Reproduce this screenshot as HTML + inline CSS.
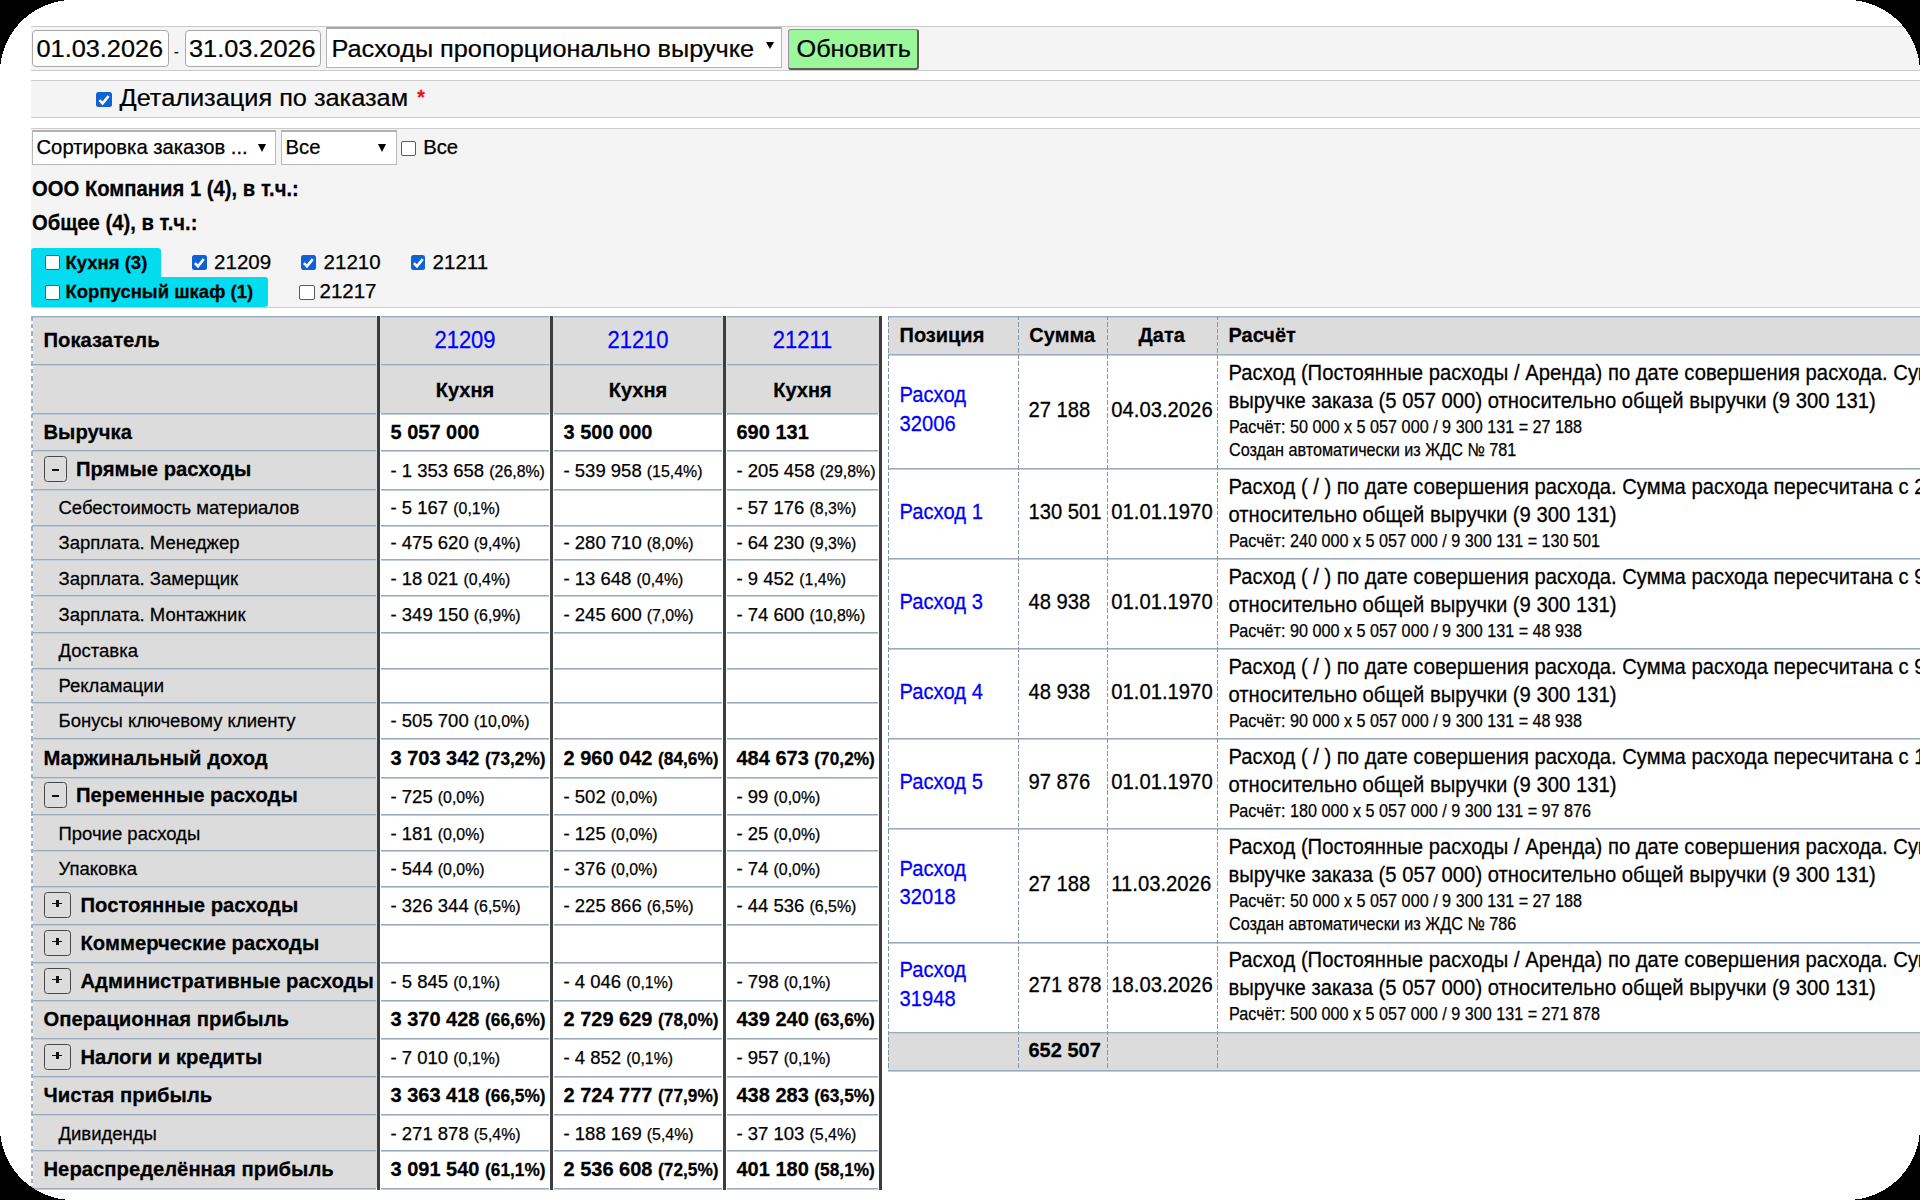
<!DOCTYPE html><html><head><meta charset="utf-8"><style>
html,body{margin:0;padding:0;background:#000;width:1920px;height:1200px;overflow:hidden}
#c{position:absolute;left:0;top:0;width:1920px;height:1200px;overflow:hidden;background:#fff;font-family:"Liberation Sans", sans-serif}
#c div{position:absolute;box-sizing:border-box}
#c .t{white-space:nowrap;-webkit-text-stroke:0.25px currentColor}
</style></head><body><div id="c">
<div style="left:31px;top:26px;width:1900px;height:45px;background:#f4f4f4;border-top:1.5px solid #cbcbcb;border-bottom:1.5px solid #cbcbcb"></div>
<div style="left:32px;top:30px;width:137px;height:37px;background:#fff;border:1.5px solid #a9a9a9;border-radius:4px"></div>
<div class="t" style="left:36.5px;top:33.99px;font-size:25.3px;line-height:29.09px;color:#000;transform:scale(1.0,0.97);transform-origin:0 23.31px;">01.03.2026</div>
<div class="t" style="left:174px;top:44.10px;font-size:14px;line-height:16.10px;color:#000;transform:scale(1.0,1.04);transform-origin:0 12.90px;">-</div>
<div style="left:185px;top:30px;width:136px;height:37px;background:#fff;border:1.5px solid #a9a9a9;border-radius:4px"></div>
<div class="t" style="left:189px;top:33.99px;font-size:25.3px;line-height:29.09px;color:#000;transform:scale(1.0,0.97);transform-origin:0 23.31px;">31.03.2026</div>
<div style="left:326px;top:27px;width:456px;height:41px;background:#fff;border:1.5px solid #b4b4b4;border-top:2px solid #a8a8a8"></div>
<div class="t" style="left:331.5px;top:33.89px;font-size:25.3px;line-height:29.09px;color:#000;transform:scale(1.0,0.97);transform-origin:0 23.31px;">Расходы пропорционально выручке</div>
<div style="left:765.75px;top:42.175px;width:0;height:0;border-left:4.25px solid transparent;border-right:4.25px solid transparent;border-top:7.65px solid #000;"></div>
<div style="left:787.5px;top:28.5px;width:131.5px;height:41px;background:#9af79a;border:1px solid #a08ca8;border-right:2px solid #5e5a60;border-bottom:2px solid #5e5a60;border-radius:3px"></div>
<div class="t" style="left:796.5px;top:33.93px;font-size:25.25px;line-height:29.04px;color:#000;transform:scale(1.0,0.97);transform-origin:0 23.27px;">Обновить</div>
<div style="left:31px;top:80px;width:1900px;height:38px;background:#f4f4f4;border-top:1.5px solid #cbcbcb;border-bottom:1.5px solid #cbcbcb"></div>
<div style="left:96px;top:92px;width:16px;height:15.2px;background:#0e62d6;border-radius:2.5px;"><svg width="16" height="15.2" viewBox="0 0 16 16" style="position:absolute;left:0;top:0"><path d="M3.2 8.6 L6.5 12 L12.8 4.2" stroke="#fff" stroke-width="2.8" fill="none" stroke-linecap="butt" stroke-linejoin="miter"/></svg></div>
<div class="t" style="left:119.5px;top:82.89px;font-size:25.3px;line-height:29.09px;color:#000;transform:scale(1.0,0.97);transform-origin:0 23.31px;">Детализация по заказам</div>
<div class="t" style="left:417.3px;top:86.33px;font-size:19.5px;line-height:22.42px;color:#ee1111;transform:scale(1.0,1.04);transform-origin:0 17.97px;font-weight:bold">*</div>
<div style="left:31px;top:128px;width:1900px;height:180px;background:#f4f4f4;border-top:1.5px solid #cbcbcb;border-bottom:1.5px solid #c9c9c9"></div>
<div style="left:32px;top:129.5px;width:244px;height:35px;background:#fff;border:1.5px solid #b9b9b9;border-top:2px solid #b0b0b0"></div>
<div class="t" style="left:36.5px;top:135.64px;font-size:20.25px;line-height:23.29px;color:#000;transform:scale(1.0,1.0);transform-origin:0 18.66px;">Сортировка заказов ...</div>
<div style="left:257.5px;top:143.95px;width:0;height:0;border-left:4.5px solid transparent;border-right:4.5px solid transparent;border-top:8.1px solid #000;"></div>
<div style="left:280.5px;top:129.5px;width:116px;height:35px;background:#fff;border:1.5px solid #b9b9b9;border-top:2px solid #b0b0b0"></div>
<div class="t" style="left:285.5px;top:135.64px;font-size:20.25px;line-height:23.29px;color:#000;transform:scale(1.0,1.0);transform-origin:0 18.66px;">Все</div>
<div style="left:378.0px;top:143.95px;width:0;height:0;border-left:4.5px solid transparent;border-right:4.5px solid transparent;border-top:8.1px solid #000;"></div>
<div style="left:401px;top:141px;width:14.5px;height:14.5px;box-sizing:border-box;background:#fff;border:1.5px solid #5a5a5a;border-radius:2px;"></div>
<div class="t" style="left:423.2px;top:135.64px;font-size:20.25px;line-height:23.29px;color:#000;transform:scale(1.0,1.0);transform-origin:0 18.66px;">Все</div>
<div class="t" style="left:32px;top:177.64px;font-size:20.25px;line-height:23.29px;font-weight:bold;color:#000;transform:scale(1.0,1.055);transform-origin:0 18.66px;">ООО Компания 1 (4), в т.ч.:</div>
<div class="t" style="left:32px;top:211.64px;font-size:20.25px;line-height:23.29px;font-weight:bold;color:#000;transform:scale(1.0,1.055);transform-origin:0 18.66px;">Общее (4), в т.ч.:</div>
<div style="left:31px;top:248px;width:130px;height:29.5px;background:#02dcee;border-radius:3px 3px 0 0"></div>
<div style="left:31px;top:277px;width:237px;height:29.5px;background:#02dcee;border-radius:3px"></div>
<div style="left:44.5px;top:255.3px;width:15px;height:15px;box-sizing:border-box;background:#fff;border:1.5px solid #5a5a5a;border-radius:2px;"></div>
<div style="left:44.5px;top:284.5px;width:15px;height:15px;box-sizing:border-box;background:#fff;border:1.5px solid #5a5a5a;border-radius:2px;"></div>
<div class="t" style="left:65.5px;top:251.75px;font-size:18.5px;line-height:21.27px;font-weight:bold;color:#000;transform:scale(1.0,1.02);transform-origin:0 17.05px;">Кухня (3)</div>
<div class="t" style="left:65.5px;top:280.75px;font-size:18.5px;line-height:21.27px;font-weight:bold;color:#000;transform:scale(1.0,1.02);transform-origin:0 17.05px;">Корпусный шкаф (1)</div>
<div style="left:192.3px;top:255px;width:14.7px;height:15.2px;background:#0e62d6;border-radius:2.5px;"><svg width="14.7" height="15.2" viewBox="0 0 16 16" style="position:absolute;left:0;top:0"><path d="M3.2 8.6 L6.5 12 L12.8 4.2" stroke="#fff" stroke-width="2.8" fill="none" stroke-linecap="butt" stroke-linejoin="miter"/></svg></div>
<div class="t" style="left:214.1px;top:250.21px;font-size:20.5px;line-height:23.57px;color:#000;transform:scale(1.0,1.0);transform-origin:0 18.89px;">21209</div>
<div style="left:301.3px;top:255px;width:14.7px;height:15.2px;background:#0e62d6;border-radius:2.5px;"><svg width="14.7" height="15.2" viewBox="0 0 16 16" style="position:absolute;left:0;top:0"><path d="M3.2 8.6 L6.5 12 L12.8 4.2" stroke="#fff" stroke-width="2.8" fill="none" stroke-linecap="butt" stroke-linejoin="miter"/></svg></div>
<div class="t" style="left:323.6px;top:250.21px;font-size:20.5px;line-height:23.57px;color:#000;transform:scale(1.0,1.0);transform-origin:0 18.89px;">21210</div>
<div style="left:410.8px;top:255px;width:14.7px;height:15.2px;background:#0e62d6;border-radius:2.5px;"><svg width="14.7" height="15.2" viewBox="0 0 16 16" style="position:absolute;left:0;top:0"><path d="M3.2 8.6 L6.5 12 L12.8 4.2" stroke="#fff" stroke-width="2.8" fill="none" stroke-linecap="butt" stroke-linejoin="miter"/></svg></div>
<div class="t" style="left:432.6px;top:250.21px;font-size:20.5px;line-height:23.57px;color:#000;transform:scale(1.0,1.0);transform-origin:0 18.89px;">21211</div>
<div style="left:299px;top:284.5px;width:15.5px;height:15.5px;box-sizing:border-box;background:#fff;border:1.5px solid #5a5a5a;border-radius:2px;"></div>
<div class="t" style="left:319.5px;top:279.11px;font-size:20.5px;line-height:23.57px;color:#000;transform:scale(1.0,1.0);transform-origin:0 18.89px;">21217</div>
<div style="left:33px;top:316px;width:344px;height:872px;background:#dcdcdc"></div>
<div style="left:380px;top:316px;width:170px;height:97px;background:#dcdcdc"></div>
<div style="left:553px;top:316px;width:170px;height:97px;background:#dcdcdc"></div>
<div style="left:726px;top:316px;width:153px;height:97px;background:#dcdcdc"></div>
<div style="left:377px;top:316px;width:3px;height:874px;background:#3d3d3d"></div>
<div style="left:550px;top:316px;width:3px;height:874px;background:#3d3d3d"></div>
<div style="left:723px;top:316px;width:3px;height:874px;background:#3d3d3d"></div>
<div style="left:879px;top:316px;width:3px;height:874px;background:#3d3d3d"></div>
<div style="left:32px;top:316px;width:344px;height:2px;background:linear-gradient(#9babbc 0 50%,#c3ced9 50% 100%)"></div>
<div style="left:381px;top:316px;width:168px;height:2px;background:linear-gradient(#9babbc 0 50%,#c3ced9 50% 100%)"></div>
<div style="left:554px;top:316px;width:168px;height:2px;background:linear-gradient(#9babbc 0 50%,#c3ced9 50% 100%)"></div>
<div style="left:727px;top:316px;width:151px;height:2px;background:linear-gradient(#9babbc 0 50%,#c3ced9 50% 100%)"></div>
<div style="left:32px;top:364px;width:344px;height:2px;background:linear-gradient(#9babbc 0 50%,#c3ced9 50% 100%)"></div>
<div style="left:381px;top:364px;width:168px;height:2px;background:linear-gradient(#9babbc 0 50%,#c3ced9 50% 100%)"></div>
<div style="left:554px;top:364px;width:168px;height:2px;background:linear-gradient(#9babbc 0 50%,#c3ced9 50% 100%)"></div>
<div style="left:727px;top:364px;width:151px;height:2px;background:linear-gradient(#9babbc 0 50%,#c3ced9 50% 100%)"></div>
<div style="left:32px;top:413px;width:344px;height:2px;background:linear-gradient(#9babbc 0 50%,#c3ced9 50% 100%)"></div>
<div style="left:381px;top:413px;width:168px;height:2px;background:linear-gradient(#9babbc 0 50%,#c3ced9 50% 100%)"></div>
<div style="left:554px;top:413px;width:168px;height:2px;background:linear-gradient(#9babbc 0 50%,#c3ced9 50% 100%)"></div>
<div style="left:727px;top:413px;width:151px;height:2px;background:linear-gradient(#9babbc 0 50%,#c3ced9 50% 100%)"></div>
<div style="left:32px;top:450px;width:344px;height:2px;background:linear-gradient(#9babbc 0 50%,#c3ced9 50% 100%)"></div>
<div style="left:381px;top:450px;width:168px;height:2px;background:linear-gradient(#9babbc 0 50%,#c3ced9 50% 100%)"></div>
<div style="left:554px;top:450px;width:168px;height:2px;background:linear-gradient(#9babbc 0 50%,#c3ced9 50% 100%)"></div>
<div style="left:727px;top:450px;width:151px;height:2px;background:linear-gradient(#9babbc 0 50%,#c3ced9 50% 100%)"></div>
<div style="left:32px;top:489px;width:344px;height:2px;background:linear-gradient(#9babbc 0 50%,#c3ced9 50% 100%)"></div>
<div style="left:381px;top:489px;width:168px;height:2px;background:linear-gradient(#9babbc 0 50%,#c3ced9 50% 100%)"></div>
<div style="left:554px;top:489px;width:168px;height:2px;background:linear-gradient(#9babbc 0 50%,#c3ced9 50% 100%)"></div>
<div style="left:727px;top:489px;width:151px;height:2px;background:linear-gradient(#9babbc 0 50%,#c3ced9 50% 100%)"></div>
<div style="left:32px;top:525px;width:344px;height:2px;background:linear-gradient(#9babbc 0 50%,#c3ced9 50% 100%)"></div>
<div style="left:381px;top:525px;width:168px;height:2px;background:linear-gradient(#9babbc 0 50%,#c3ced9 50% 100%)"></div>
<div style="left:554px;top:525px;width:168px;height:2px;background:linear-gradient(#9babbc 0 50%,#c3ced9 50% 100%)"></div>
<div style="left:727px;top:525px;width:151px;height:2px;background:linear-gradient(#9babbc 0 50%,#c3ced9 50% 100%)"></div>
<div style="left:32px;top:559px;width:344px;height:2px;background:linear-gradient(#9babbc 0 50%,#c3ced9 50% 100%)"></div>
<div style="left:381px;top:559px;width:168px;height:2px;background:linear-gradient(#9babbc 0 50%,#c3ced9 50% 100%)"></div>
<div style="left:554px;top:559px;width:168px;height:2px;background:linear-gradient(#9babbc 0 50%,#c3ced9 50% 100%)"></div>
<div style="left:727px;top:559px;width:151px;height:2px;background:linear-gradient(#9babbc 0 50%,#c3ced9 50% 100%)"></div>
<div style="left:32px;top:595px;width:344px;height:2px;background:linear-gradient(#9babbc 0 50%,#c3ced9 50% 100%)"></div>
<div style="left:381px;top:595px;width:168px;height:2px;background:linear-gradient(#9babbc 0 50%,#c3ced9 50% 100%)"></div>
<div style="left:554px;top:595px;width:168px;height:2px;background:linear-gradient(#9babbc 0 50%,#c3ced9 50% 100%)"></div>
<div style="left:727px;top:595px;width:151px;height:2px;background:linear-gradient(#9babbc 0 50%,#c3ced9 50% 100%)"></div>
<div style="left:32px;top:632px;width:344px;height:2px;background:linear-gradient(#9babbc 0 50%,#c3ced9 50% 100%)"></div>
<div style="left:381px;top:632px;width:168px;height:2px;background:linear-gradient(#9babbc 0 50%,#c3ced9 50% 100%)"></div>
<div style="left:554px;top:632px;width:168px;height:2px;background:linear-gradient(#9babbc 0 50%,#c3ced9 50% 100%)"></div>
<div style="left:727px;top:632px;width:151px;height:2px;background:linear-gradient(#9babbc 0 50%,#c3ced9 50% 100%)"></div>
<div style="left:32px;top:668px;width:344px;height:2px;background:linear-gradient(#9babbc 0 50%,#c3ced9 50% 100%)"></div>
<div style="left:381px;top:668px;width:168px;height:2px;background:linear-gradient(#9babbc 0 50%,#c3ced9 50% 100%)"></div>
<div style="left:554px;top:668px;width:168px;height:2px;background:linear-gradient(#9babbc 0 50%,#c3ced9 50% 100%)"></div>
<div style="left:727px;top:668px;width:151px;height:2px;background:linear-gradient(#9babbc 0 50%,#c3ced9 50% 100%)"></div>
<div style="left:32px;top:702px;width:344px;height:2px;background:linear-gradient(#9babbc 0 50%,#c3ced9 50% 100%)"></div>
<div style="left:381px;top:702px;width:168px;height:2px;background:linear-gradient(#9babbc 0 50%,#c3ced9 50% 100%)"></div>
<div style="left:554px;top:702px;width:168px;height:2px;background:linear-gradient(#9babbc 0 50%,#c3ced9 50% 100%)"></div>
<div style="left:727px;top:702px;width:151px;height:2px;background:linear-gradient(#9babbc 0 50%,#c3ced9 50% 100%)"></div>
<div style="left:32px;top:738px;width:344px;height:2px;background:linear-gradient(#9babbc 0 50%,#c3ced9 50% 100%)"></div>
<div style="left:381px;top:738px;width:168px;height:2px;background:linear-gradient(#9babbc 0 50%,#c3ced9 50% 100%)"></div>
<div style="left:554px;top:738px;width:168px;height:2px;background:linear-gradient(#9babbc 0 50%,#c3ced9 50% 100%)"></div>
<div style="left:727px;top:738px;width:151px;height:2px;background:linear-gradient(#9babbc 0 50%,#c3ced9 50% 100%)"></div>
<div style="left:32px;top:777px;width:344px;height:2px;background:linear-gradient(#9babbc 0 50%,#c3ced9 50% 100%)"></div>
<div style="left:381px;top:777px;width:168px;height:2px;background:linear-gradient(#9babbc 0 50%,#c3ced9 50% 100%)"></div>
<div style="left:554px;top:777px;width:168px;height:2px;background:linear-gradient(#9babbc 0 50%,#c3ced9 50% 100%)"></div>
<div style="left:727px;top:777px;width:151px;height:2px;background:linear-gradient(#9babbc 0 50%,#c3ced9 50% 100%)"></div>
<div style="left:32px;top:814px;width:344px;height:2px;background:linear-gradient(#9babbc 0 50%,#c3ced9 50% 100%)"></div>
<div style="left:381px;top:814px;width:168px;height:2px;background:linear-gradient(#9babbc 0 50%,#c3ced9 50% 100%)"></div>
<div style="left:554px;top:814px;width:168px;height:2px;background:linear-gradient(#9babbc 0 50%,#c3ced9 50% 100%)"></div>
<div style="left:727px;top:814px;width:151px;height:2px;background:linear-gradient(#9babbc 0 50%,#c3ced9 50% 100%)"></div>
<div style="left:32px;top:850px;width:344px;height:2px;background:linear-gradient(#9babbc 0 50%,#c3ced9 50% 100%)"></div>
<div style="left:381px;top:850px;width:168px;height:2px;background:linear-gradient(#9babbc 0 50%,#c3ced9 50% 100%)"></div>
<div style="left:554px;top:850px;width:168px;height:2px;background:linear-gradient(#9babbc 0 50%,#c3ced9 50% 100%)"></div>
<div style="left:727px;top:850px;width:151px;height:2px;background:linear-gradient(#9babbc 0 50%,#c3ced9 50% 100%)"></div>
<div style="left:32px;top:886px;width:344px;height:2px;background:linear-gradient(#9babbc 0 50%,#c3ced9 50% 100%)"></div>
<div style="left:381px;top:886px;width:168px;height:2px;background:linear-gradient(#9babbc 0 50%,#c3ced9 50% 100%)"></div>
<div style="left:554px;top:886px;width:168px;height:2px;background:linear-gradient(#9babbc 0 50%,#c3ced9 50% 100%)"></div>
<div style="left:727px;top:886px;width:151px;height:2px;background:linear-gradient(#9babbc 0 50%,#c3ced9 50% 100%)"></div>
<div style="left:32px;top:924px;width:344px;height:2px;background:linear-gradient(#9babbc 0 50%,#c3ced9 50% 100%)"></div>
<div style="left:381px;top:924px;width:168px;height:2px;background:linear-gradient(#9babbc 0 50%,#c3ced9 50% 100%)"></div>
<div style="left:554px;top:924px;width:168px;height:2px;background:linear-gradient(#9babbc 0 50%,#c3ced9 50% 100%)"></div>
<div style="left:727px;top:924px;width:151px;height:2px;background:linear-gradient(#9babbc 0 50%,#c3ced9 50% 100%)"></div>
<div style="left:32px;top:962px;width:344px;height:2px;background:linear-gradient(#9babbc 0 50%,#c3ced9 50% 100%)"></div>
<div style="left:381px;top:962px;width:168px;height:2px;background:linear-gradient(#9babbc 0 50%,#c3ced9 50% 100%)"></div>
<div style="left:554px;top:962px;width:168px;height:2px;background:linear-gradient(#9babbc 0 50%,#c3ced9 50% 100%)"></div>
<div style="left:727px;top:962px;width:151px;height:2px;background:linear-gradient(#9babbc 0 50%,#c3ced9 50% 100%)"></div>
<div style="left:32px;top:1000px;width:344px;height:2px;background:linear-gradient(#9babbc 0 50%,#c3ced9 50% 100%)"></div>
<div style="left:381px;top:1000px;width:168px;height:2px;background:linear-gradient(#9babbc 0 50%,#c3ced9 50% 100%)"></div>
<div style="left:554px;top:1000px;width:168px;height:2px;background:linear-gradient(#9babbc 0 50%,#c3ced9 50% 100%)"></div>
<div style="left:727px;top:1000px;width:151px;height:2px;background:linear-gradient(#9babbc 0 50%,#c3ced9 50% 100%)"></div>
<div style="left:32px;top:1038px;width:344px;height:2px;background:linear-gradient(#9babbc 0 50%,#c3ced9 50% 100%)"></div>
<div style="left:381px;top:1038px;width:168px;height:2px;background:linear-gradient(#9babbc 0 50%,#c3ced9 50% 100%)"></div>
<div style="left:554px;top:1038px;width:168px;height:2px;background:linear-gradient(#9babbc 0 50%,#c3ced9 50% 100%)"></div>
<div style="left:727px;top:1038px;width:151px;height:2px;background:linear-gradient(#9babbc 0 50%,#c3ced9 50% 100%)"></div>
<div style="left:32px;top:1076px;width:344px;height:2px;background:linear-gradient(#9babbc 0 50%,#c3ced9 50% 100%)"></div>
<div style="left:381px;top:1076px;width:168px;height:2px;background:linear-gradient(#9babbc 0 50%,#c3ced9 50% 100%)"></div>
<div style="left:554px;top:1076px;width:168px;height:2px;background:linear-gradient(#9babbc 0 50%,#c3ced9 50% 100%)"></div>
<div style="left:727px;top:1076px;width:151px;height:2px;background:linear-gradient(#9babbc 0 50%,#c3ced9 50% 100%)"></div>
<div style="left:32px;top:1114px;width:344px;height:2px;background:linear-gradient(#9babbc 0 50%,#c3ced9 50% 100%)"></div>
<div style="left:381px;top:1114px;width:168px;height:2px;background:linear-gradient(#9babbc 0 50%,#c3ced9 50% 100%)"></div>
<div style="left:554px;top:1114px;width:168px;height:2px;background:linear-gradient(#9babbc 0 50%,#c3ced9 50% 100%)"></div>
<div style="left:727px;top:1114px;width:151px;height:2px;background:linear-gradient(#9babbc 0 50%,#c3ced9 50% 100%)"></div>
<div style="left:32px;top:1150px;width:344px;height:2px;background:linear-gradient(#9babbc 0 50%,#c3ced9 50% 100%)"></div>
<div style="left:381px;top:1150px;width:168px;height:2px;background:linear-gradient(#9babbc 0 50%,#c3ced9 50% 100%)"></div>
<div style="left:554px;top:1150px;width:168px;height:2px;background:linear-gradient(#9babbc 0 50%,#c3ced9 50% 100%)"></div>
<div style="left:727px;top:1150px;width:151px;height:2px;background:linear-gradient(#9babbc 0 50%,#c3ced9 50% 100%)"></div>
<div style="left:32px;top:1188px;width:344px;height:2px;background:linear-gradient(#9babbc 0 50%,#c3ced9 50% 100%)"></div>
<div style="left:381px;top:1188px;width:168px;height:2px;background:linear-gradient(#9babbc 0 50%,#c3ced9 50% 100%)"></div>
<div style="left:554px;top:1188px;width:168px;height:2px;background:linear-gradient(#9babbc 0 50%,#c3ced9 50% 100%)"></div>
<div style="left:727px;top:1188px;width:151px;height:2px;background:linear-gradient(#9babbc 0 50%,#c3ced9 50% 100%)"></div>
<div style="left:31px;top:316px;width:2px;height:874px;background:repeating-linear-gradient(to bottom,#9fb0c2 0 4.75px,transparent 4.75px 7.5px)"></div>
<div class="t" style="left:43.5px;top:329.34px;font-size:20.25px;line-height:23.29px;font-weight:bold;color:#000;transform:scale(1.0,1.04);transform-origin:0 18.66px;">Показатель</div>
<div class="t" style="left:380px;width:170px;text-align:center;top:327.53px;font-size:22px;line-height:25.30px;color:#0000ff;transform:scale(1.0,1.066);transform-origin:0 20.27px;">21209</div>
<div class="t" style="left:380px;width:170px;text-align:center;top:378.87px;font-size:20px;line-height:23.00px;font-weight:bold;color:#000;transform:scale(1.0,1.04);transform-origin:0 18.43px;">Кухня</div>
<div class="t" style="left:553px;width:170px;text-align:center;top:327.53px;font-size:22px;line-height:25.30px;color:#0000ff;transform:scale(1.0,1.066);transform-origin:0 20.27px;">21210</div>
<div class="t" style="left:553px;width:170px;text-align:center;top:378.87px;font-size:20px;line-height:23.00px;font-weight:bold;color:#000;transform:scale(1.0,1.04);transform-origin:0 18.43px;">Кухня</div>
<div class="t" style="left:726px;width:153px;text-align:center;top:327.53px;font-size:22px;line-height:25.30px;color:#0000ff;transform:scale(1.0,1.066);transform-origin:0 20.27px;">21211</div>
<div class="t" style="left:726px;width:153px;text-align:center;top:378.87px;font-size:20px;line-height:23.00px;font-weight:bold;color:#000;transform:scale(1.0,1.04);transform-origin:0 18.43px;">Кухня</div>
<div class="t" style="left:43.5px;top:420.64px;font-size:20.25px;line-height:23.29px;font-weight:bold;color:#000;transform:scale(1.0,1.04);transform-origin:0 18.66px;">Выручка</div>
<div class="t" style="left:390.5px;top:420.87px;font-size:20px;line-height:23.00px;color:#000;transform:scale(1.0,1.04);transform-origin:0 18.43px;"><span style="font-weight:bold">5 057 000</span></div>
<div class="t" style="left:563.5px;top:420.87px;font-size:20px;line-height:23.00px;color:#000;transform:scale(1.0,1.04);transform-origin:0 18.43px;"><span style="font-weight:bold">3 500 000</span></div>
<div class="t" style="left:736.5px;top:420.87px;font-size:20px;line-height:23.00px;color:#000;transform:scale(1.0,1.04);transform-origin:0 18.43px;"><span style="font-weight:bold">690 131</span></div>
<div style="left:44px;top:456.4px;width:23px;height:26px;border:1.6px solid #474747;border-radius:3.5px;background:transparent"></div>
<div style="left:52.3px;top:469.4px;width:6.7px;height:1.7px;background:#111"></div>
<div class="t" style="left:76px;top:458.44px;font-size:20.25px;line-height:23.29px;font-weight:bold;color:#000;transform:scale(1.0,1.04);transform-origin:0 18.66px;">Прямые расходы</div>
<div class="t" style="left:390.5px;top:459.85px;font-size:18.5px;line-height:21.27px;color:#000;transform:scale(1.0,1.0);transform-origin:0 17.05px;">- 1 353 658 <span style="font-size:15.9px">(26,8%)</span></div>
<div class="t" style="left:563.5px;top:459.85px;font-size:18.5px;line-height:21.27px;color:#000;transform:scale(1.0,1.0);transform-origin:0 17.05px;">- 539 958 <span style="font-size:15.9px">(15,4%)</span></div>
<div class="t" style="left:736.5px;top:459.85px;font-size:18.5px;line-height:21.27px;color:#000;transform:scale(1.0,1.0);transform-origin:0 17.05px;">- 205 458 <span style="font-size:15.9px">(29,8%)</span></div>
<div class="t" style="left:58.5px;top:497.25px;font-size:18.5px;line-height:21.27px;color:#000;transform:scale(1.0,1.02);transform-origin:0 17.05px;">Себестоимость материалов</div>
<div class="t" style="left:390.5px;top:497.25px;font-size:18.5px;line-height:21.27px;color:#000;transform:scale(1.0,1.0);transform-origin:0 17.05px;">- 5 167 <span style="font-size:15.9px">(0,1%)</span></div>
<div class="t" style="left:736.5px;top:497.25px;font-size:18.5px;line-height:21.27px;color:#000;transform:scale(1.0,1.0);transform-origin:0 17.05px;">- 57 176 <span style="font-size:15.9px">(8,3%)</span></div>
<div class="t" style="left:58.5px;top:532.40px;font-size:18.5px;line-height:21.27px;color:#000;transform:scale(1.0,1.02);transform-origin:0 17.05px;">Зарплата. Менеджер</div>
<div class="t" style="left:390.5px;top:532.40px;font-size:18.5px;line-height:21.27px;color:#000;transform:scale(1.0,1.0);transform-origin:0 17.05px;">- 475 620 <span style="font-size:15.9px">(9,4%)</span></div>
<div class="t" style="left:563.5px;top:532.40px;font-size:18.5px;line-height:21.27px;color:#000;transform:scale(1.0,1.0);transform-origin:0 17.05px;">- 280 710 <span style="font-size:15.9px">(8,0%)</span></div>
<div class="t" style="left:736.5px;top:532.40px;font-size:18.5px;line-height:21.27px;color:#000;transform:scale(1.0,1.0);transform-origin:0 17.05px;">- 64 230 <span style="font-size:15.9px">(9,3%)</span></div>
<div class="t" style="left:58.5px;top:567.55px;font-size:18.5px;line-height:21.27px;color:#000;transform:scale(1.0,1.02);transform-origin:0 17.05px;">Зарплата. Замерщик</div>
<div class="t" style="left:390.5px;top:567.55px;font-size:18.5px;line-height:21.27px;color:#000;transform:scale(1.0,1.0);transform-origin:0 17.05px;">- 18 021 <span style="font-size:15.9px">(0,4%)</span></div>
<div class="t" style="left:563.5px;top:567.55px;font-size:18.5px;line-height:21.27px;color:#000;transform:scale(1.0,1.0);transform-origin:0 17.05px;">- 13 648 <span style="font-size:15.9px">(0,4%)</span></div>
<div class="t" style="left:736.5px;top:567.55px;font-size:18.5px;line-height:21.27px;color:#000;transform:scale(1.0,1.0);transform-origin:0 17.05px;">- 9 452 <span style="font-size:15.9px">(1,4%)</span></div>
<div class="t" style="left:58.5px;top:603.65px;font-size:18.5px;line-height:21.27px;color:#000;transform:scale(1.0,1.02);transform-origin:0 17.05px;">Зарплата. Монтажник</div>
<div class="t" style="left:390.5px;top:603.65px;font-size:18.5px;line-height:21.27px;color:#000;transform:scale(1.0,1.0);transform-origin:0 17.05px;">- 349 150 <span style="font-size:15.9px">(6,9%)</span></div>
<div class="t" style="left:563.5px;top:603.65px;font-size:18.5px;line-height:21.27px;color:#000;transform:scale(1.0,1.0);transform-origin:0 17.05px;">- 245 600 <span style="font-size:15.9px">(7,0%)</span></div>
<div class="t" style="left:736.5px;top:603.65px;font-size:18.5px;line-height:21.27px;color:#000;transform:scale(1.0,1.0);transform-origin:0 17.05px;">- 74 600 <span style="font-size:15.9px">(10,8%)</span></div>
<div class="t" style="left:58.5px;top:639.75px;font-size:18.5px;line-height:21.27px;color:#000;transform:scale(1.0,1.02);transform-origin:0 17.05px;">Доставка</div>
<div class="t" style="left:58.5px;top:675.10px;font-size:18.5px;line-height:21.27px;color:#000;transform:scale(1.0,1.02);transform-origin:0 17.05px;">Рекламации</div>
<div class="t" style="left:58.5px;top:710.35px;font-size:18.5px;line-height:21.27px;color:#000;transform:scale(1.0,1.02);transform-origin:0 17.05px;">Бонусы ключевому клиенту</div>
<div class="t" style="left:390.5px;top:710.35px;font-size:18.5px;line-height:21.27px;color:#000;transform:scale(1.0,1.0);transform-origin:0 17.05px;">- 505 700 <span style="font-size:15.9px">(10,0%)</span></div>
<div class="t" style="left:43.5px;top:746.54px;font-size:20.25px;line-height:23.29px;font-weight:bold;color:#000;transform:scale(1.0,1.04);transform-origin:0 18.66px;">Маржинальный доход</div>
<div class="t" style="left:390.5px;top:746.77px;font-size:20px;line-height:23.00px;color:#000;transform:scale(1.0,1.04);transform-origin:0 18.43px;"><span style="font-weight:bold">3 703 342</span> <span style="font-weight:bold;font-size:17.3px">(73,2%)</span></div>
<div class="t" style="left:563.5px;top:746.77px;font-size:20px;line-height:23.00px;color:#000;transform:scale(1.0,1.04);transform-origin:0 18.43px;"><span style="font-weight:bold">2 960 042</span> <span style="font-weight:bold;font-size:17.3px">(84,6%)</span></div>
<div class="t" style="left:736.5px;top:746.77px;font-size:20px;line-height:23.00px;color:#000;transform:scale(1.0,1.04);transform-origin:0 18.43px;"><span style="font-weight:bold">484 673</span> <span style="font-weight:bold;font-size:17.3px">(70,2%)</span></div>
<div style="left:44px;top:782.4px;width:23px;height:26px;border:1.6px solid #474747;border-radius:3.5px;background:transparent"></div>
<div style="left:52.3px;top:795.35px;width:6.7px;height:1.7px;background:#111"></div>
<div class="t" style="left:76px;top:784.39px;font-size:20.25px;line-height:23.29px;font-weight:bold;color:#000;transform:scale(1.0,1.04);transform-origin:0 18.66px;">Переменные расходы</div>
<div class="t" style="left:390.5px;top:785.80px;font-size:18.5px;line-height:21.27px;color:#000;transform:scale(1.0,1.0);transform-origin:0 17.05px;">- 725 <span style="font-size:15.9px">(0,0%)</span></div>
<div class="t" style="left:563.5px;top:785.80px;font-size:18.5px;line-height:21.27px;color:#000;transform:scale(1.0,1.0);transform-origin:0 17.05px;">- 502 <span style="font-size:15.9px">(0,0%)</span></div>
<div class="t" style="left:736.5px;top:785.80px;font-size:18.5px;line-height:21.27px;color:#000;transform:scale(1.0,1.0);transform-origin:0 17.05px;">- 99 <span style="font-size:15.9px">(0,0%)</span></div>
<div class="t" style="left:58.5px;top:822.55px;font-size:18.5px;line-height:21.27px;color:#000;transform:scale(1.0,1.02);transform-origin:0 17.05px;">Прочие расходы</div>
<div class="t" style="left:390.5px;top:822.55px;font-size:18.5px;line-height:21.27px;color:#000;transform:scale(1.0,1.0);transform-origin:0 17.05px;">- 181 <span style="font-size:15.9px">(0,0%)</span></div>
<div class="t" style="left:563.5px;top:822.55px;font-size:18.5px;line-height:21.27px;color:#000;transform:scale(1.0,1.0);transform-origin:0 17.05px;">- 125 <span style="font-size:15.9px">(0,0%)</span></div>
<div class="t" style="left:736.5px;top:822.55px;font-size:18.5px;line-height:21.27px;color:#000;transform:scale(1.0,1.0);transform-origin:0 17.05px;">- 25 <span style="font-size:15.9px">(0,0%)</span></div>
<div class="t" style="left:58.5px;top:858.45px;font-size:18.5px;line-height:21.27px;color:#000;transform:scale(1.0,1.02);transform-origin:0 17.05px;">Упаковка</div>
<div class="t" style="left:390.5px;top:858.45px;font-size:18.5px;line-height:21.27px;color:#000;transform:scale(1.0,1.0);transform-origin:0 17.05px;">- 544 <span style="font-size:15.9px">(0,0%)</span></div>
<div class="t" style="left:563.5px;top:858.45px;font-size:18.5px;line-height:21.27px;color:#000;transform:scale(1.0,1.0);transform-origin:0 17.05px;">- 376 <span style="font-size:15.9px">(0,0%)</span></div>
<div class="t" style="left:736.5px;top:858.45px;font-size:18.5px;line-height:21.27px;color:#000;transform:scale(1.0,1.0);transform-origin:0 17.05px;">- 74 <span style="font-size:15.9px">(0,0%)</span></div>
<div style="left:44px;top:891.6px;width:27px;height:26px;border:1.6px solid #474747;border-radius:3.5px;background:transparent"></div>
<div style="left:52.3px;top:902.65px;width:9.9px;height:1.7px;background:#111"></div>
<div style="left:56.3px;top:899.9499999999999px;width:2.4px;height:7.0px;background:#111"></div>
<div class="t" style="left:80.5px;top:893.69px;font-size:20.25px;line-height:23.29px;font-weight:bold;color:#000;transform:scale(1.0,1.04);transform-origin:0 18.66px;">Постоянные расходы</div>
<div class="t" style="left:390.5px;top:895.10px;font-size:18.5px;line-height:21.27px;color:#000;transform:scale(1.0,1.0);transform-origin:0 17.05px;">- 326 344 <span style="font-size:15.9px">(6,5%)</span></div>
<div class="t" style="left:563.5px;top:895.10px;font-size:18.5px;line-height:21.27px;color:#000;transform:scale(1.0,1.0);transform-origin:0 17.05px;">- 225 866 <span style="font-size:15.9px">(6,5%)</span></div>
<div class="t" style="left:736.5px;top:895.10px;font-size:18.5px;line-height:21.27px;color:#000;transform:scale(1.0,1.0);transform-origin:0 17.05px;">- 44 536 <span style="font-size:15.9px">(6,5%)</span></div>
<div style="left:44px;top:929.6px;width:27px;height:26px;border:1.6px solid #474747;border-radius:3.5px;background:transparent"></div>
<div style="left:52.3px;top:940.625px;width:9.9px;height:1.7px;background:#111"></div>
<div style="left:56.3px;top:937.925px;width:2.4px;height:7.0px;background:#111"></div>
<div class="t" style="left:80.5px;top:931.66px;font-size:20.25px;line-height:23.29px;font-weight:bold;color:#000;transform:scale(1.0,1.04);transform-origin:0 18.66px;">Коммерческие расходы</div>
<div style="left:44px;top:967.6px;width:27px;height:26px;border:1.6px solid #474747;border-radius:3.5px;background:transparent"></div>
<div style="left:52.3px;top:978.6px;width:9.9px;height:1.7px;background:#111"></div>
<div style="left:56.3px;top:975.9px;width:2.4px;height:7.0px;background:#111"></div>
<div class="t" style="left:80.5px;top:969.64px;font-size:20.25px;line-height:23.29px;font-weight:bold;color:#000;transform:scale(1.0,1.04);transform-origin:0 18.66px;">Административные расходы</div>
<div class="t" style="left:390.5px;top:971.05px;font-size:18.5px;line-height:21.27px;color:#000;transform:scale(1.0,1.0);transform-origin:0 17.05px;">- 5 845 <span style="font-size:15.9px">(0,1%)</span></div>
<div class="t" style="left:563.5px;top:971.05px;font-size:18.5px;line-height:21.27px;color:#000;transform:scale(1.0,1.0);transform-origin:0 17.05px;">- 4 046 <span style="font-size:15.9px">(0,1%)</span></div>
<div class="t" style="left:736.5px;top:971.05px;font-size:18.5px;line-height:21.27px;color:#000;transform:scale(1.0,1.0);transform-origin:0 17.05px;">- 798 <span style="font-size:15.9px">(0,1%)</span></div>
<div class="t" style="left:43.5px;top:1008.06px;font-size:20.25px;line-height:23.29px;font-weight:bold;color:#000;transform:scale(1.0,1.04);transform-origin:0 18.66px;">Операционная прибыль</div>
<div class="t" style="left:390.5px;top:1008.29px;font-size:20px;line-height:23.00px;color:#000;transform:scale(1.0,1.04);transform-origin:0 18.43px;"><span style="font-weight:bold">3 370 428</span> <span style="font-weight:bold;font-size:17.3px">(66,6%)</span></div>
<div class="t" style="left:563.5px;top:1008.29px;font-size:20px;line-height:23.00px;color:#000;transform:scale(1.0,1.04);transform-origin:0 18.43px;"><span style="font-weight:bold">2 729 629</span> <span style="font-weight:bold;font-size:17.3px">(78,0%)</span></div>
<div class="t" style="left:736.5px;top:1008.29px;font-size:20px;line-height:23.00px;color:#000;transform:scale(1.0,1.04);transform-origin:0 18.43px;"><span style="font-weight:bold">439 240</span> <span style="font-weight:bold;font-size:17.3px">(63,6%)</span></div>
<div style="left:44px;top:1043.8px;width:27px;height:26px;border:1.6px solid #474747;border-radius:3.5px;background:transparent"></div>
<div style="left:52.3px;top:1054.8px;width:9.9px;height:1.7px;background:#111"></div>
<div style="left:56.3px;top:1052.1000000000001px;width:2.4px;height:7.0px;background:#111"></div>
<div class="t" style="left:80.5px;top:1045.84px;font-size:20.25px;line-height:23.29px;font-weight:bold;color:#000;transform:scale(1.0,1.04);transform-origin:0 18.66px;">Налоги и кредиты</div>
<div class="t" style="left:390.5px;top:1047.25px;font-size:18.5px;line-height:21.27px;color:#000;transform:scale(1.0,1.0);transform-origin:0 17.05px;">- 7 010 <span style="font-size:15.9px">(0,1%)</span></div>
<div class="t" style="left:563.5px;top:1047.25px;font-size:18.5px;line-height:21.27px;color:#000;transform:scale(1.0,1.0);transform-origin:0 17.05px;">- 4 852 <span style="font-size:15.9px">(0,1%)</span></div>
<div class="t" style="left:736.5px;top:1047.25px;font-size:18.5px;line-height:21.27px;color:#000;transform:scale(1.0,1.0);transform-origin:0 17.05px;">- 957 <span style="font-size:15.9px">(0,1%)</span></div>
<div class="t" style="left:43.5px;top:1084.14px;font-size:20.25px;line-height:23.29px;font-weight:bold;color:#000;transform:scale(1.0,1.04);transform-origin:0 18.66px;">Чистая прибыль</div>
<div class="t" style="left:390.5px;top:1084.37px;font-size:20px;line-height:23.00px;color:#000;transform:scale(1.0,1.04);transform-origin:0 18.43px;"><span style="font-weight:bold">3 363 418</span> <span style="font-weight:bold;font-size:17.3px">(66,5%)</span></div>
<div class="t" style="left:563.5px;top:1084.37px;font-size:20px;line-height:23.00px;color:#000;transform:scale(1.0,1.04);transform-origin:0 18.43px;"><span style="font-weight:bold">2 724 777</span> <span style="font-weight:bold;font-size:17.3px">(77,9%)</span></div>
<div class="t" style="left:736.5px;top:1084.37px;font-size:20px;line-height:23.00px;color:#000;transform:scale(1.0,1.04);transform-origin:0 18.43px;"><span style="font-weight:bold">438 283</span> <span style="font-weight:bold;font-size:17.3px">(63,5%)</span></div>
<div class="t" style="left:58.5px;top:1122.55px;font-size:18.5px;line-height:21.27px;color:#000;transform:scale(1.0,1.02);transform-origin:0 17.05px;">Дивиденды</div>
<div class="t" style="left:390.5px;top:1122.55px;font-size:18.5px;line-height:21.27px;color:#000;transform:scale(1.0,1.0);transform-origin:0 17.05px;">- 271 878 <span style="font-size:15.9px">(5,4%)</span></div>
<div class="t" style="left:563.5px;top:1122.55px;font-size:18.5px;line-height:21.27px;color:#000;transform:scale(1.0,1.0);transform-origin:0 17.05px;">- 188 169 <span style="font-size:15.9px">(5,4%)</span></div>
<div class="t" style="left:736.5px;top:1122.55px;font-size:18.5px;line-height:21.27px;color:#000;transform:scale(1.0,1.0);transform-origin:0 17.05px;">- 37 103 <span style="font-size:15.9px">(5,4%)</span></div>
<div class="t" style="left:43.5px;top:1157.99px;font-size:20.25px;line-height:23.29px;font-weight:bold;color:#000;transform:scale(1.0,1.04);transform-origin:0 18.66px;">Нераспределённая прибыль</div>
<div class="t" style="left:390.5px;top:1158.22px;font-size:20px;line-height:23.00px;color:#000;transform:scale(1.0,1.04);transform-origin:0 18.43px;"><span style="font-weight:bold">3 091 540</span> <span style="font-weight:bold;font-size:17.3px">(61,1%)</span></div>
<div class="t" style="left:563.5px;top:1158.22px;font-size:20px;line-height:23.00px;color:#000;transform:scale(1.0,1.04);transform-origin:0 18.43px;"><span style="font-weight:bold">2 536 608</span> <span style="font-weight:bold;font-size:17.3px">(72,5%)</span></div>
<div class="t" style="left:736.5px;top:1158.22px;font-size:20px;line-height:23.00px;color:#000;transform:scale(1.0,1.04);transform-origin:0 18.43px;"><span style="font-weight:bold">401 180</span> <span style="font-weight:bold;font-size:17.3px">(58,1%)</span></div>
<div style="left:888px;top:316px;width:1052px;height:38px;background:#dcdcdc"></div>
<div style="left:888px;top:1032px;width:1052px;height:38px;background:#dcdcdc"></div>
<div style="left:888px;top:316px;width:1052px;height:2px;background:linear-gradient(#9babbc 0 50%,#c3ced9 50% 100%)"></div>
<div style="left:888px;top:354px;width:1052px;height:2px;background:linear-gradient(#9babbc 0 50%,#c3ced9 50% 100%)"></div>
<div style="left:888px;top:468px;width:1052px;height:2px;background:linear-gradient(#9babbc 0 50%,#c3ced9 50% 100%)"></div>
<div style="left:888px;top:558px;width:1052px;height:2px;background:linear-gradient(#9babbc 0 50%,#c3ced9 50% 100%)"></div>
<div style="left:888px;top:648px;width:1052px;height:2px;background:linear-gradient(#9babbc 0 50%,#c3ced9 50% 100%)"></div>
<div style="left:888px;top:738px;width:1052px;height:2px;background:linear-gradient(#9babbc 0 50%,#c3ced9 50% 100%)"></div>
<div style="left:888px;top:828px;width:1052px;height:2px;background:linear-gradient(#9babbc 0 50%,#c3ced9 50% 100%)"></div>
<div style="left:888px;top:942px;width:1052px;height:2px;background:linear-gradient(#9babbc 0 50%,#c3ced9 50% 100%)"></div>
<div style="left:888px;top:1032px;width:1052px;height:2px;background:linear-gradient(#9babbc 0 50%,#c3ced9 50% 100%)"></div>
<div style="left:888px;top:1070px;width:1052px;height:2px;background:linear-gradient(#9babbc 0 50%,#c3ced9 50% 100%)"></div>
<div style="left:888px;top:316px;width:1.3px;height:754px;background:repeating-linear-gradient(to bottom,#8297ad 0 4.5px,transparent 4.5px 6.5px)"></div>
<div style="left:1018px;top:316px;width:1.3px;height:754px;background:repeating-linear-gradient(to bottom,#8297ad 0 4.5px,transparent 4.5px 6.5px)"></div>
<div style="left:1106.5px;top:316px;width:1.3px;height:754px;background:repeating-linear-gradient(to bottom,#8297ad 0 4.5px,transparent 4.5px 6.5px)"></div>
<div style="left:1217px;top:316px;width:1.3px;height:754px;background:repeating-linear-gradient(to bottom,#8297ad 0 4.5px,transparent 4.5px 6.5px)"></div>
<div class="t" style="left:899.5px;top:324.27px;font-size:20px;line-height:23.00px;font-weight:bold;color:#000;transform:scale(1.0,1.04);transform-origin:0 18.43px;">Позиция</div>
<div class="t" style="left:1018px;width:88.5px;text-align:center;top:324.27px;font-size:20px;line-height:23.00px;font-weight:bold;color:#000;transform:scale(1.0,1.04);transform-origin:0 18.43px;">Сумма</div>
<div class="t" style="left:1106.5px;width:110.5px;text-align:center;top:324.27px;font-size:20px;line-height:23.00px;font-weight:bold;color:#000;transform:scale(1.0,1.04);transform-origin:0 18.43px;">Дата</div>
<div class="t" style="left:1228.5px;top:324.27px;font-size:20px;line-height:23.00px;font-weight:bold;color:#000;transform:scale(1.0,1.04);transform-origin:0 18.43px;">Расчёт</div>
<div class="t" style="left:899.5px;top:384.06px;font-size:20.2px;line-height:23.23px;color:#0000ff;transform:scale(1.0,1.065);transform-origin:0 18.61px;">Расход</div>
<div class="t" style="left:899.5px;top:412.76px;font-size:20.2px;line-height:23.23px;color:#0000ff;transform:scale(1.0,1.065);transform-origin:0 18.61px;">32006</div>
<div class="t" style="left:1028.5px;top:398.96px;font-size:20.2px;line-height:23.23px;color:#000;transform:scale(1.0,1.065);transform-origin:0 18.61px;">27 188</div>
<div class="t" style="left:1111.3px;top:398.91px;font-size:20.25px;line-height:23.29px;color:#000;transform:scale(1.0,1.065);transform-origin:0 18.66px;">04.03.2026</div>
<div class="t" style="left:1228.5px;top:361.94px;font-size:20.25px;line-height:23.29px;color:#000;transform:scale(1.0,1.065);transform-origin:0 18.66px;">Расход (Постоянные расходы / Аренда) по дате совершения расхода. Сумма расхода пересчитана с 50 000 пропорционально</div>
<div class="t" style="left:1228.5px;top:389.94px;font-size:20.25px;line-height:23.29px;color:#000;transform:scale(1.0,1.065);transform-origin:0 18.66px;">выручке заказа (5 057 000) относительно общей выручки (9 300 131)</div>
<div class="t" style="left:1228.5px;top:416.05px;font-size:18.5px;line-height:21.27px;color:#000;transform:scale(0.875,1.0);transform-origin:0 17.05px;">Расчёт: 50 000 x 5 057 000 / 9 300 131 = 27 188</div>
<div class="t" style="left:1228.5px;top:439.05px;font-size:18.5px;line-height:21.27px;color:#000;transform:scale(0.875,1.0);transform-origin:0 17.05px;">Создан автоматически из ЖДС № 781</div>
<div class="t" style="left:899.5px;top:501.24px;font-size:20.2px;line-height:23.23px;color:#0000ff;transform:scale(1.0,1.065);transform-origin:0 18.61px;">Расход 1</div>
<div class="t" style="left:1028.5px;top:500.84px;font-size:20.2px;line-height:23.23px;color:#000;transform:scale(1.0,1.065);transform-origin:0 18.61px;">130 501</div>
<div class="t" style="left:1111.3px;top:500.79px;font-size:20.25px;line-height:23.29px;color:#000;transform:scale(1.0,1.065);transform-origin:0 18.66px;">01.01.1970</div>
<div class="t" style="left:1228.5px;top:475.69px;font-size:20.25px;line-height:23.29px;color:#000;transform:scale(1.0,1.065);transform-origin:0 18.66px;">Расход ( / ) по дате совершения расхода. Сумма расхода пересчитана с 240 000 пропорционально выручке заказа (5 057 000)</div>
<div class="t" style="left:1228.5px;top:503.69px;font-size:20.25px;line-height:23.29px;color:#000;transform:scale(1.0,1.065);transform-origin:0 18.66px;">относительно общей выручки (9 300 131)</div>
<div class="t" style="left:1228.5px;top:529.80px;font-size:18.5px;line-height:21.27px;color:#000;transform:scale(0.875,1.0);transform-origin:0 17.05px;">Расчёт: 240 000 x 5 057 000 / 9 300 131 = 130 501</div>
<div class="t" style="left:899.5px;top:591.24px;font-size:20.2px;line-height:23.23px;color:#0000ff;transform:scale(1.0,1.065);transform-origin:0 18.61px;">Расход 3</div>
<div class="t" style="left:1028.5px;top:590.84px;font-size:20.2px;line-height:23.23px;color:#000;transform:scale(1.0,1.065);transform-origin:0 18.61px;">48 938</div>
<div class="t" style="left:1111.3px;top:590.79px;font-size:20.25px;line-height:23.29px;color:#000;transform:scale(1.0,1.065);transform-origin:0 18.66px;">01.01.1970</div>
<div class="t" style="left:1228.5px;top:565.69px;font-size:20.25px;line-height:23.29px;color:#000;transform:scale(1.0,1.065);transform-origin:0 18.66px;">Расход ( / ) по дате совершения расхода. Сумма расхода пересчитана с 90 000 пропорционально выручке заказа (5 057 000)</div>
<div class="t" style="left:1228.5px;top:593.69px;font-size:20.25px;line-height:23.29px;color:#000;transform:scale(1.0,1.065);transform-origin:0 18.66px;">относительно общей выручки (9 300 131)</div>
<div class="t" style="left:1228.5px;top:619.80px;font-size:18.5px;line-height:21.27px;color:#000;transform:scale(0.875,1.0);transform-origin:0 17.05px;">Расчёт: 90 000 x 5 057 000 / 9 300 131 = 48 938</div>
<div class="t" style="left:899.5px;top:681.24px;font-size:20.2px;line-height:23.23px;color:#0000ff;transform:scale(1.0,1.065);transform-origin:0 18.61px;">Расход 4</div>
<div class="t" style="left:1028.5px;top:680.84px;font-size:20.2px;line-height:23.23px;color:#000;transform:scale(1.0,1.065);transform-origin:0 18.61px;">48 938</div>
<div class="t" style="left:1111.3px;top:680.79px;font-size:20.25px;line-height:23.29px;color:#000;transform:scale(1.0,1.065);transform-origin:0 18.66px;">01.01.1970</div>
<div class="t" style="left:1228.5px;top:655.69px;font-size:20.25px;line-height:23.29px;color:#000;transform:scale(1.0,1.065);transform-origin:0 18.66px;">Расход ( / ) по дате совершения расхода. Сумма расхода пересчитана с 90 000 пропорционально выручке заказа (5 057 000)</div>
<div class="t" style="left:1228.5px;top:683.69px;font-size:20.25px;line-height:23.29px;color:#000;transform:scale(1.0,1.065);transform-origin:0 18.66px;">относительно общей выручки (9 300 131)</div>
<div class="t" style="left:1228.5px;top:709.80px;font-size:18.5px;line-height:21.27px;color:#000;transform:scale(0.875,1.0);transform-origin:0 17.05px;">Расчёт: 90 000 x 5 057 000 / 9 300 131 = 48 938</div>
<div class="t" style="left:899.5px;top:771.24px;font-size:20.2px;line-height:23.23px;color:#0000ff;transform:scale(1.0,1.065);transform-origin:0 18.61px;">Расход 5</div>
<div class="t" style="left:1028.5px;top:770.84px;font-size:20.2px;line-height:23.23px;color:#000;transform:scale(1.0,1.065);transform-origin:0 18.61px;">97 876</div>
<div class="t" style="left:1111.3px;top:770.79px;font-size:20.25px;line-height:23.29px;color:#000;transform:scale(1.0,1.065);transform-origin:0 18.66px;">01.01.1970</div>
<div class="t" style="left:1228.5px;top:745.69px;font-size:20.25px;line-height:23.29px;color:#000;transform:scale(1.0,1.065);transform-origin:0 18.66px;">Расход ( / ) по дате совершения расхода. Сумма расхода пересчитана с 180 000 пропорционально выручке заказа (5 057 000)</div>
<div class="t" style="left:1228.5px;top:773.69px;font-size:20.25px;line-height:23.29px;color:#000;transform:scale(1.0,1.065);transform-origin:0 18.66px;">относительно общей выручки (9 300 131)</div>
<div class="t" style="left:1228.5px;top:799.80px;font-size:18.5px;line-height:21.27px;color:#000;transform:scale(0.875,1.0);transform-origin:0 17.05px;">Расчёт: 180 000 x 5 057 000 / 9 300 131 = 97 876</div>
<div class="t" style="left:899.5px;top:857.66px;font-size:20.2px;line-height:23.23px;color:#0000ff;transform:scale(1.0,1.065);transform-origin:0 18.61px;">Расход</div>
<div class="t" style="left:899.5px;top:886.36px;font-size:20.2px;line-height:23.23px;color:#0000ff;transform:scale(1.0,1.065);transform-origin:0 18.61px;">32018</div>
<div class="t" style="left:1028.5px;top:872.56px;font-size:20.2px;line-height:23.23px;color:#000;transform:scale(1.0,1.065);transform-origin:0 18.61px;">27 188</div>
<div class="t" style="left:1111.3px;top:872.51px;font-size:20.25px;line-height:23.29px;color:#000;transform:scale(1.0,1.065);transform-origin:0 18.66px;">11.03.2026</div>
<div class="t" style="left:1228.5px;top:835.69px;font-size:20.25px;line-height:23.29px;color:#000;transform:scale(1.0,1.065);transform-origin:0 18.66px;">Расход (Постоянные расходы / Аренда) по дате совершения расхода. Сумма расхода пересчитана с 50 000 пропорционально</div>
<div class="t" style="left:1228.5px;top:863.69px;font-size:20.25px;line-height:23.29px;color:#000;transform:scale(1.0,1.065);transform-origin:0 18.66px;">выручке заказа (5 057 000) относительно общей выручки (9 300 131)</div>
<div class="t" style="left:1228.5px;top:889.80px;font-size:18.5px;line-height:21.27px;color:#000;transform:scale(0.875,1.0);transform-origin:0 17.05px;">Расчёт: 50 000 x 5 057 000 / 9 300 131 = 27 188</div>
<div class="t" style="left:1228.5px;top:912.80px;font-size:18.5px;line-height:21.27px;color:#000;transform:scale(0.875,1.0);transform-origin:0 17.05px;">Создан автоматически из ЖДС № 786</div>
<div class="t" style="left:899.5px;top:959.41px;font-size:20.2px;line-height:23.23px;color:#0000ff;transform:scale(1.0,1.065);transform-origin:0 18.61px;">Расход</div>
<div class="t" style="left:899.5px;top:988.11px;font-size:20.2px;line-height:23.23px;color:#0000ff;transform:scale(1.0,1.065);transform-origin:0 18.61px;">31948</div>
<div class="t" style="left:1028.5px;top:974.31px;font-size:20.2px;line-height:23.23px;color:#000;transform:scale(1.0,1.065);transform-origin:0 18.61px;">271 878</div>
<div class="t" style="left:1111.3px;top:974.26px;font-size:20.25px;line-height:23.29px;color:#000;transform:scale(1.0,1.065);transform-origin:0 18.66px;">18.03.2026</div>
<div class="t" style="left:1228.5px;top:949.14px;font-size:20.25px;line-height:23.29px;color:#000;transform:scale(1.0,1.065);transform-origin:0 18.66px;">Расход (Постоянные расходы / Аренда) по дате совершения расхода. Сумма расхода пересчитана с 500 000 пропорционально</div>
<div class="t" style="left:1228.5px;top:977.14px;font-size:20.25px;line-height:23.29px;color:#000;transform:scale(1.0,1.065);transform-origin:0 18.66px;">выручке заказа (5 057 000) относительно общей выручки (9 300 131)</div>
<div class="t" style="left:1228.5px;top:1003.25px;font-size:18.5px;line-height:21.27px;color:#000;transform:scale(0.875,1.0);transform-origin:0 17.05px;">Расчёт: 500 000 x 5 057 000 / 9 300 131 = 271 878</div>
<div class="t" style="left:1028.5px;top:1039.07px;font-size:20px;line-height:23.00px;font-weight:bold;color:#000;transform:scale(1.0,1.04);transform-origin:0 18.43px;">652 507</div>
<svg width="1920" height="1200" style="position:absolute;left:0;top:0;pointer-events:none" shape-rendering="crispEdges"><path d="M0 0 L0 73.00 L0.00 73.00 L0.06 70.13 L0.23 67.27 L0.51 64.42 L0.90 61.58 L1.40 58.76 L2.02 55.96 L2.74 53.18 L3.57 50.44 L4.51 47.73 L5.56 45.06 L6.71 42.44 L7.96 39.86 L9.31 37.33 L10.76 34.86 L12.30 32.44 L13.94 30.09 L15.67 27.81 L17.49 25.59 L19.39 23.45 L21.38 21.38 L23.45 19.39 L25.59 17.49 L27.81 15.67 L30.09 13.94 L32.44 12.30 L34.86 10.76 L37.33 9.31 L39.86 7.96 L42.44 6.71 L45.06 5.56 L47.73 4.51 L50.44 3.57 L53.18 2.74 L55.96 2.02 L58.76 1.40 L61.58 0.90 L64.42 0.51 L67.27 0.23 L70.13 0.06 L73.00 0.00 L73.00 0 Z" fill="#000"/><path d="M0 0 L0 73.00 L0.00 73.00 L0.06 70.13 L0.23 67.27 L0.51 64.42 L0.90 61.58 L1.40 58.76 L2.02 55.96 L2.74 53.18 L3.57 50.44 L4.51 47.73 L5.56 45.06 L6.71 42.44 L7.96 39.86 L9.31 37.33 L10.76 34.86 L12.30 32.44 L13.94 30.09 L15.67 27.81 L17.49 25.59 L19.39 23.45 L21.38 21.38 L23.45 19.39 L25.59 17.49 L27.81 15.67 L30.09 13.94 L32.44 12.30 L34.86 10.76 L37.33 9.31 L39.86 7.96 L42.44 6.71 L45.06 5.56 L47.73 4.51 L50.44 3.57 L53.18 2.74 L55.96 2.02 L58.76 1.40 L61.58 0.90 L64.42 0.51 L67.27 0.23 L70.13 0.06 L73.00 0.00 L73.00 0 Z" fill="#000" transform="translate(1920 0) scale(-1 1)"/><path d="M0 0 L0 73.00 L0.00 73.00 L0.06 70.13 L0.23 67.27 L0.51 64.42 L0.90 61.58 L1.40 58.76 L2.02 55.96 L2.74 53.18 L3.57 50.44 L4.51 47.73 L5.56 45.06 L6.71 42.44 L7.96 39.86 L9.31 37.33 L10.76 34.86 L12.30 32.44 L13.94 30.09 L15.67 27.81 L17.49 25.59 L19.39 23.45 L21.38 21.38 L23.45 19.39 L25.59 17.49 L27.81 15.67 L30.09 13.94 L32.44 12.30 L34.86 10.76 L37.33 9.31 L39.86 7.96 L42.44 6.71 L45.06 5.56 L47.73 4.51 L50.44 3.57 L53.18 2.74 L55.96 2.02 L58.76 1.40 L61.58 0.90 L64.42 0.51 L67.27 0.23 L70.13 0.06 L73.00 0.00 L73.00 0 Z" fill="#000" transform="translate(0 1200) scale(1 -1)"/><path d="M0 0 L0 73.00 L0.00 73.00 L0.06 70.13 L0.23 67.27 L0.51 64.42 L0.90 61.58 L1.40 58.76 L2.02 55.96 L2.74 53.18 L3.57 50.44 L4.51 47.73 L5.56 45.06 L6.71 42.44 L7.96 39.86 L9.31 37.33 L10.76 34.86 L12.30 32.44 L13.94 30.09 L15.67 27.81 L17.49 25.59 L19.39 23.45 L21.38 21.38 L23.45 19.39 L25.59 17.49 L27.81 15.67 L30.09 13.94 L32.44 12.30 L34.86 10.76 L37.33 9.31 L39.86 7.96 L42.44 6.71 L45.06 5.56 L47.73 4.51 L50.44 3.57 L53.18 2.74 L55.96 2.02 L58.76 1.40 L61.58 0.90 L64.42 0.51 L67.27 0.23 L70.13 0.06 L73.00 0.00 L73.00 0 Z" fill="#000" transform="translate(1920 1200) scale(-1 -1)"/></svg>
</div></body></html>
